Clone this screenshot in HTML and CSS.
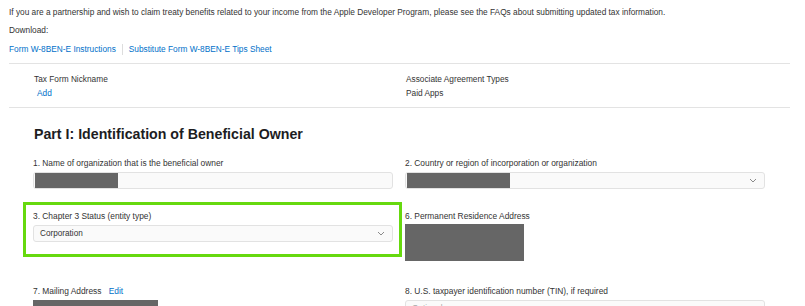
FILE: index.html
```html
<!DOCTYPE html>
<html lang="en">
<head>
    <meta charset="UTF-8">
    <title>Tax Forms - W-8BEN-E</title>
    <link rel="stylesheet" href="styles.css">
</head>
<body>
    <div class="page">
        <p class="intro">If you are a partnership and wish to claim treaty benefits related to your income from the Apple Developer Program, please see the FAQs about submitting updated tax information.</p>
        <p class="intro">Download:</p>
        <div class="downloads">
            <a href="#">Form W-8BEN-E Instructions</a>
            <span class="sep"></span>
            <a href="#">Substitute Form W-8BEN-E Tips Sheet</a>
        </div>

        <!-- nickname / agreements -->
        <div class="summary">
            <div class="summary-item">
                <div class="summary-title">Tax Form Nickname</div>
                <a href="#" class="add-link">Add</a>
            </div>
            <div class="summary-item">
                <div class="summary-title">Associate Agreement Types</div>
                <div class="summary-value">Paid Apps</div>
            </div>
        </div>

        <h2 class="part-title">Part I: Identification of Beneficial Owner</h2>

        <div class="fields">
            <div class="field">
                <label>1. Name of organization that is the beneficial owner</label>
                <div class="input"><span class="redact redact-name"></span></div>
            </div>
            <div class="field">
                <label>2. Country or region of incorporation or organization</label>
                <div class="input select">
                    <span class="redact redact-country"></span>
                    <svg class="chevron" width="8" height="5" viewBox="0 0 8 5"><path d="M1 1l3 3 3-3" fill="none" stroke="#8a8a8a" stroke-width="1"/></svg>
                </div>
            </div>
            <div class="field highlighted">
                <label>3. Chapter 3 Status (entity type)</label>
                <div class="input select">
                    <span class="value">Corporation</span>
                    <svg class="chevron" width="8" height="5" viewBox="0 0 8 5"><path d="M1 1l3 3 3-3" fill="none" stroke="#8a8a8a" stroke-width="1"/></svg>
                </div>
            </div>
            <div class="field">
                <label>6. Permanent Residence Address</label>
                <span class="redact redact-address"></span>
            </div>
            <div class="field">
                <label>7. Mailing Address <a href="#" class="edit-link">Edit</a></label>
                <span class="redact redact-mailing"></span>
            </div>
            <div class="field">
                <label>8. U.S. taxpayer identification number (TIN), if required</label>
                <div class="input"><span class="placeholder">Optional</span></div>
            </div>
        </div>
    </div>
</body>
</html>
```

FILE: styles.css
```css
body {
    margin: 0;
    font-family: "Helvetica Neue", "Liberation Sans", Arial, sans-serif;
    background-color: #fff;
    color: #333;
    overflow: hidden;
}
a {
    color: #0070c9;
    text-decoration: none;
}
.page {
    padding: 6px 15px 0 9px;
}
.intro {
    margin: 0 0 6px;
    font-size: 8.3px;
    line-height: 12px;
}
.downloads {
    display: flex;
    align-items: center;
    gap: 6px;
    font-size: 8.3px;
    line-height: 12px;
    margin-top: 7px;
    padding-bottom: 8px;
    border-bottom: 1px solid #e3e3e3;
}
.downloads .sep {
    width: 1px;
    height: 11px;
    background-color: #ddd;
}
.summary {
    display: grid;
    grid-template-columns: 372px 1fr;
    padding: 9px 0 8px 25px;
    border-bottom: 1px solid #e3e3e3;
    font-size: 8.3px;
    line-height: 12px;
}
.summary-title {
    color: #333;
    margin-bottom: 2px;
}
.add-link {
    margin-left: 3px;
}
.part-title {
    margin: 16px 0 0 25px;
    font-size: 14.2px;
    line-height: 20px;
    font-weight: bold;
    color: #1d1d1f;
}
.fields {
    display: grid;
    grid-template-columns: 360px 360px;
    align-items: start;
    column-gap: 12px;
    row-gap: 22px;
    margin: 14px 0 0 24px;
}
.field {
    position: relative;
}
.field label {
    display: block;
    font-size: 8.4px;
    line-height: 10px;
    color: #333;
    margin-bottom: 4px;
}
.edit-link {
    margin-left: 5px;
}
.input {
    display: flex;
    align-items: center;
    height: 15px;
    padding: 0 1px;
    border: 1px solid #e2e2e2;
    border-radius: 3px;
    background-color: #fafafa;
    font-size: 8.2px;
}
.select {
    justify-content: space-between;
}
.select .chevron {
    margin-right: 6px;
}
.select .value {
    margin-left: 5px;
    color: #333;
}
.placeholder {
    margin-left: 5px;
    color: #aaa;
}
.redact {
    display: block;
    background-color: #666;
}
.redact-name {
    width: 83px;
    height: 15px;
}
.redact-country {
    width: 103px;
    height: 15px;
}
.redact-address {
    width: 119px;
    height: 37px;
    margin: -1px 0 3px;
}
.redact-mailing {
    width: 125px;
    height: 20px;
}
.highlighted::after {
    content: "";
    position: absolute;
    top: -9px;
    left: -10px;
    right: -9px;
    bottom: -15px;
    border: 3px solid #66d90e;
}
```
